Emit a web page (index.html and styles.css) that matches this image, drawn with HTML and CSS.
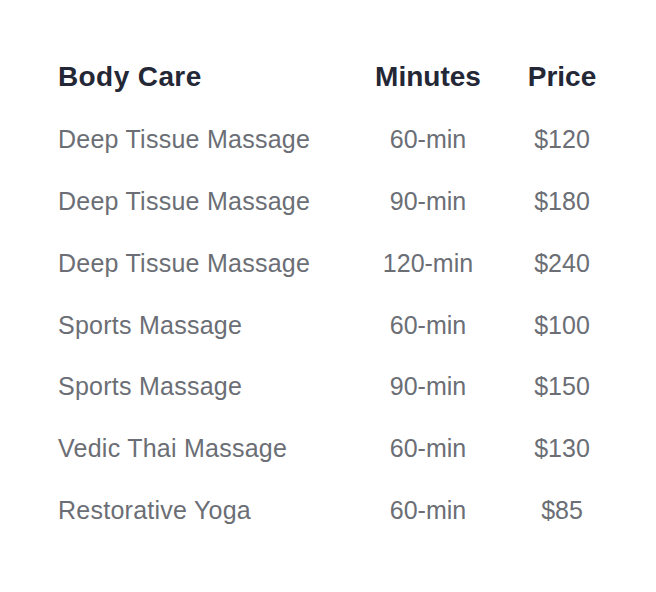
FILE: index.html
```html
<!DOCTYPE html>
<html lang="en">
<head>
    <meta charset="UTF-8">
    <meta name="viewport" content="width=device-width, initial-scale=1.0">
    <title>Body Care Menu</title>
    <link rel="stylesheet" href="styles.css">
</head>
<body>
    <div class="menu">
        <div class="row head">
            <div class="name">Body Care</div>
            <div class="mins">Minutes</div>
            <div class="price">Price</div>
        </div>
        <div class="row">
            <div class="name">Deep Tissue Massage</div>
            <div class="mins">60-min</div>
            <div class="price">$120</div>
        </div>
        <div class="row">
            <div class="name">Deep Tissue Massage</div>
            <div class="mins">90-min</div>
            <div class="price">$180</div>
        </div>
        <div class="row">
            <div class="name">Deep Tissue Massage</div>
            <div class="mins">120-min</div>
            <div class="price">$240</div>
        </div>
        <div class="row">
            <div class="name">Sports Massage</div>
            <div class="mins">60-min</div>
            <div class="price">$100</div>
        </div>
        <div class="row">
            <div class="name">Sports Massage</div>
            <div class="mins">90-min</div>
            <div class="price">$150</div>
        </div>
        <div class="row">
            <div class="name">Vedic Thai Massage</div>
            <div class="mins">60-min</div>
            <div class="price">$130</div>
        </div>
        <div class="row">
            <div class="name">Restorative Yoga</div>
            <div class="mins">60-min</div>
            <div class="price">$85</div>
        </div>
    </div>
</body>
</html>
```

FILE: styles.css
```css
body {
    margin: 0;
    padding: 0;
    background-color: white;
    font-family: "Liberation Sans", Arial, sans-serif;
}
.menu {
    padding: 44px 58px 0 58px;
}
.row {
    display: grid;
    grid-template-columns: 1fr 196px 72px;
    align-items: center;
    height: 61.75px;
    font-size: 25px;
    color: #6b6e75;
    white-space: nowrap;
}
.row .name {
    letter-spacing: 0.25px;
}
.row.head {
    height: 65px;
    font-size: 28px;
    font-weight: bold;
    color: #232736;
}
.row.head .name {
    letter-spacing: 0.4px;
}
.mins,
.price {
    text-align: center;
}
```
